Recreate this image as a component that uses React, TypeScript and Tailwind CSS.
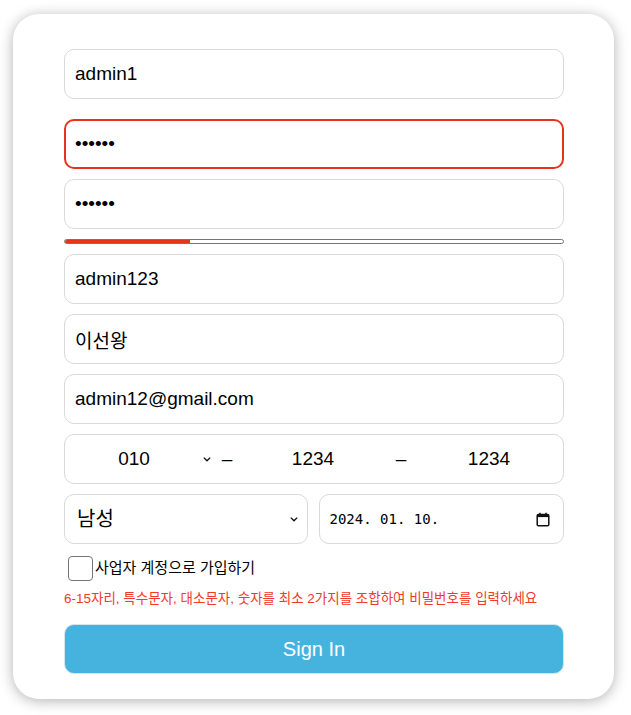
import React from "react";

const font = { fontFamily: '"Liberation Sans", Arial, "Noto Sans CJK KR", sans-serif' };

function Chevron({ className = "" }: { className?: string }) {
  return (
    <svg width="10" height="6" viewBox="0 0 10 6" className={className}>
      <path d="M1.5 1.2 L5 4.6 L8.5 1.2" fill="none" stroke="#111" strokeWidth="1.6" strokeLinecap="round" />
    </svg>
  );
}

export default function App() {
  const box = "h-[50px] w-full rounded-[10px] border border-[#d9d9d9] bg-white px-[10px] text-[19px] text-black outline-none";

  return (
    <div className="min-h-[715px] bg-white pt-[14px] pl-[13px]" style={font}>
      <div className="w-[601px] rounded-[26px] bg-white pl-[51px] pr-[50px] pt-[35px] pb-[25px] shadow-[0_2px_14px_rgba(0,0,0,0.3)]">
        <div className="flex flex-col">
          <input className={box} defaultValue="admin1" readOnly />

          <input
            type="password"
            className="mt-[20px] h-[50px] w-full rounded-[10px] border-2 border-[#e8321e] bg-white px-[9px] text-[19px] text-black outline-none"
            defaultValue="123456"
            readOnly
          />

          <input type="password" className={`${box} mt-[10px]`} defaultValue="123456" readOnly />

          {/* strength bar */}
          <div className="mt-[10px] h-[5px] w-full rounded-full border border-[#767676] bg-white overflow-hidden">
            <div className="h-full bg-[#e8321e]" style={{ width: "25%" }} />
          </div>

          <input className={`${box} mt-[10px]`} defaultValue="admin123" readOnly />
          <input className={`${box} mt-[10px]`} defaultValue="이선왕" readOnly />
          <input className={`${box} mt-[10px]`} defaultValue="admin12@gmail.com" readOnly />

          {/* phone */}
          <div className="mt-[10px] flex h-[50px] w-full items-center rounded-[10px] border border-[#d9d9d9] text-[19px] text-black">
            <div className="flex w-[150px] items-center">
              <span className="w-[138px] text-center">010</span>
              <Chevron className="h-[5px] w-[8px]" />
            </div>
            <span className="w-[24px] text-center">–</span>
            <span className="w-[148px] text-center">1234</span>
            <span className="w-[28px] text-center">–</span>
            <span className="flex-1 text-center">1234</span>
          </div>

          {/* gender + birth */}
          <div className="mt-[10px] flex gap-[11px]">
            <div className="flex h-[50px] flex-1 items-center justify-between rounded-[10px] border border-[#d9d9d9] pl-[12px] pr-[9px] text-[20px] text-black">
              <span>남성</span>
              <Chevron className="h-[5px] w-[8px]" />
            </div>
            <div className="flex h-[50px] flex-1 items-center justify-between rounded-[10px] border border-[#d9d9d9] pl-[10px] pr-[13px] text-black">
              <span style={{ fontFamily: '"DejaVu Sans Mono", "Liberation Mono", monospace' }} className="text-[14px]">
                2024. 01. 10.
              </span>
              <svg width="14" height="15" viewBox="0 0 14 15">
                <rect x="1.2" y="2.5" width="11.6" height="11.3" rx="1.3" fill="none" stroke="#111" strokeWidth="1.5" />
                <rect x="1.2" y="2.5" width="11.6" height="2.6" fill="#111" />
                <path d="M4 0.8 V3 M10 0.8 V3" stroke="#111" strokeWidth="1.5" />
              </svg>
            </div>
          </div>

          {/* business checkbox */}
          <label className="mt-[12px] flex items-center text-[15px] text-black">
            <span className="ml-[4px] h-[25px] w-[25px] rounded-[4px] border border-[#767676] bg-white" />
            <span className="ml-[2px]">사업자 계정으로 가입하기</span>
          </label>

          <p className="mt-[8px] text-[13.5px] text-[#f03a2a]">
            6-15자리, 특수문자, 대소문자, 숫자를 최소 2가지를 조합하여 비밀번호를 입력하세요
          </p>

          <button className="mt-[15px] h-[50px] w-full rounded-[10px] border border-[#d4e6ef] bg-[#46b3df] text-[20px] text-white">
            Sign In
          </button>
        </div>
      </div>
    </div>
  );
}
